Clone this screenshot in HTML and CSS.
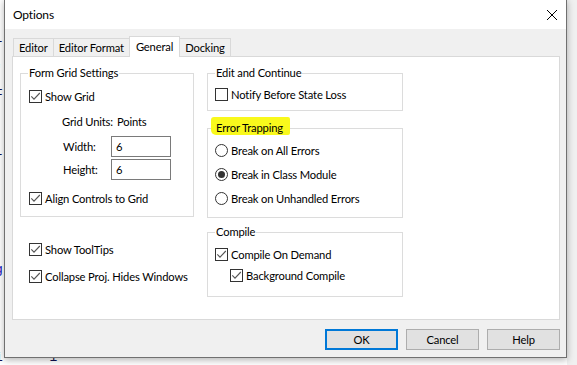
FILE: index.html
```html
<!DOCTYPE html>
<html>
  <head>
    <meta charset="utf-8"/>
    <title>Options</title>
    <link rel="stylesheet" href="styles.css">
  </head>

  <body>
    <div id="desk">
      <pre class="code">r

'

F




r








<span class="kw">g</span>






i      i</pre>
      <div class="scroll"></div>

      <div id="dialog">
        <div class="titlebar">
          <span class="title">Options</span>
          <svg class="close" width="10" height="10" viewBox="0 0 10 10"><path d="M0 0L10 10M10 0L0 10" stroke="#000" stroke-width="1"/></svg>
        </div>

        <div class="client">
          <div class="tabs">
            <span class="tab">Editor</span>
            <span class="tab">Editor Format</span>
            <span class="tab active">General</span>
            <span class="tab">Docking</span>
          </div>

          <div class="panel">
            <div class="col left">
              <fieldset class="group grid">
                <legend>Form Grid Settings</legend>
                <div class="gbody">
                  <label class="check">
                    <svg width="13" height="13" viewBox="0 0 13 13"><rect x=".5" y=".5" width="12" height="12" fill="#fff" stroke="#333"/><path d="M2.3 6.3L5 9.2 10.8 3" fill="none" stroke="#555" stroke-width="1.1"/></svg>
                    Show Grid
                  </label>
                  <div class="units"><span class="ulabel">Grid Units:</span>Points</div>
                  <div class="field"><span class="flabel">Width:</span><input type="text" value="6"></div>
                  <div class="field second"><span class="flabel">Height:</span><input type="text" value="6"></div>
                  <label class="check align">
                    <svg width="13" height="13" viewBox="0 0 13 13"><rect x=".5" y=".5" width="12" height="12" fill="#fff" stroke="#333"/><path d="M2.3 6.3L5 9.2 10.8 3" fill="none" stroke="#555" stroke-width="1.1"/></svg>
                    Align Controls to Grid
                  </label>
                </div>
              </fieldset>

              <label class="check loose tips">
                <svg width="13" height="13" viewBox="0 0 13 13"><rect x=".5" y=".5" width="12" height="12" fill="#fff" stroke="#333"/><path d="M2.3 6.3L5 9.2 10.8 3" fill="none" stroke="#555" stroke-width="1.1"/></svg>
                Show ToolTips
              </label>
              <label class="check loose collapse">
                <svg width="13" height="13" viewBox="0 0 13 13"><rect x=".5" y=".5" width="12" height="12" fill="#fff" stroke="#333"/><path d="M2.3 6.3L5 9.2 10.8 3" fill="none" stroke="#555" stroke-width="1.1"/></svg>
                Collapse Proj. Hides Windows
              </label>
            </div>

            <div class="col right">
              <fieldset class="group edit">
                <legend>Edit and Continue</legend>
                <div class="gbody">
                  <label class="check">
                    <svg width="13" height="13" viewBox="0 0 13 13"><rect x=".5" y=".5" width="12" height="12" fill="#fff" stroke="#333"/></svg>
                    Notify Before State Loss
                  </label>
                </div>
              </fieldset>

              <fieldset class="group errors">
                <legend class="marked">Error Trapping</legend>
                <div class="gbody">
                  <label class="check radio">
                    <svg width="13" height="13" viewBox="0 0 13 13"><circle cx="6.5" cy="6.5" r="6" fill="#fff" stroke="#333"/></svg>
                    Break on All Errors
                  </label>
                  <label class="check radio">
                    <svg width="13" height="13" viewBox="0 0 13 13"><circle cx="6.5" cy="6.5" r="6" fill="#fff" stroke="#333"/><circle cx="6.5" cy="6.5" r="3.5" fill="#333"/></svg>
                    Break in Class Module
                  </label>
                  <label class="check radio">
                    <svg width="13" height="13" viewBox="0 0 13 13"><circle cx="6.5" cy="6.5" r="6" fill="#fff" stroke="#333"/></svg>
                    Break on Unhandled Errors
                  </label>
                </div>
              </fieldset>

              <fieldset class="group compile">
                <legend>Compile</legend>
                <div class="gbody">
                  <label class="check">
                    <svg width="13" height="13" viewBox="0 0 13 13"><rect x=".5" y=".5" width="12" height="12" fill="#fff" stroke="#333"/><path d="M2.3 6.3L5 9.2 10.8 3" fill="none" stroke="#555" stroke-width="1.1"/></svg>
                    Compile On Demand
                  </label>
                  <label class="check sub">
                    <svg width="13" height="13" viewBox="0 0 13 13"><rect x=".5" y=".5" width="12" height="12" fill="#fff" stroke="#333"/><path d="M2.3 6.3L5 9.2 10.8 3" fill="none" stroke="#555" stroke-width="1.1"/></svg>
                    Background Compile
                  </label>
                </div>
              </fieldset>
            </div>
          </div>

          <div class="buttons">
            <button class="default">OK</button>
            <button>Cancel</button>
            <button>Help</button>
          </div>
        </div>
      </div>
    </div>
  </body>
</html>
```

FILE: styles.css
```css
html, body {
  margin: 0;
}

body {
  width: 577px;
  height: 365px;
  overflow: hidden;
  background: #fff;
  font-family: Lato, "Noto Sans", sans-serif;
  font-size: 11.2px;
  letter-spacing: -0.15px;
  color: #000;
}

#desk {
  position: relative;
  width: 577px;
  height: 365px;
}

/* code window behind the dialog */
#desk .code {
  margin: 0 0 0 -5px;
  padding-top: 39px;
  font-family: "Liberation Mono", monospace;
  font-size: 13px;
  line-height: 12.5px;
  letter-spacing: 0;
  color: #101050;
}

#desk .code .kw {
  color: #1010c0;
}

#desk .scroll {
  position: absolute;
  top: 0;
  right: 0;
  width: 10px;
  height: 365px;
  background: #f0f0f0;
}

#dialog {
  position: absolute;
  left: 4px;
  top: -1px;
  width: 563px;
  height: 359px;
  box-sizing: border-box;
  border: 1px solid #707070;
  background: #f0f0f0;
  box-shadow: 0 2px 7px rgba(0, 0, 0, 0.3);
  display: flex;
  flex-direction: column;
}

#dialog .titlebar {
  height: 29px;
  flex: none;
  background: #fff;
  display: flex;
  align-items: center;
  justify-content: space-between;
  padding: 0 9px 0 8px;
  font-size: 12px;
}

#dialog .titlebar .close {
  display: block;
}

#dialog .client {
  flex: 1;
  padding: 7px 6px 7px 7px;
  display: flex;
  flex-direction: column;
}

/* tabs */
#dialog .tabs {
  height: 21px;
  display: flex;
  align-items: flex-end;
  margin: 0 0 -1px 1px;
  position: relative;
  z-index: 1;
}

#dialog .tab {
  box-sizing: border-box;
  height: 19px;
  line-height: 17px;
  padding: 0 5px;
  margin-right: -1px;
  border: 1px solid #d9d9d9;
  background: #f0f0f0;
}

#dialog .tab.active {
  height: 21px;
  line-height: 19px;
  padding: 0 6px;
  border-bottom: none;
  background: #fff;
}

#dialog .panel {
  box-sizing: border-box;
  height: 264px;
  flex: none;
  background: #fff;
  border: 1px solid #d9d9d9;
  display: flex;
}

#dialog .col.left {
  margin-left: 7px;
  width: 174px;
}

#dialog .col.right {
  margin-left: 13px;
  width: 196px;
}

/* group boxes */
#dialog fieldset {
  margin: 0;
  padding: 0;
  min-width: 0;
  border: 1px solid #dcdcdc;
}

#dialog legend {
  margin-left: 7px;
  padding: 0 1px;
  line-height: 14px;
}

#dialog legend.marked {
  position: relative;
  z-index: 0;
}

/* marker highlight drawn over the legend */
#dialog legend.marked::before {
  content: "";
  position: absolute;
  left: -4px;
  right: -6px;
  top: -4px;
  bottom: 0;
  background: #f9f91c;
  border-radius: 3px 2px 2px 5px;
  z-index: -1;
}

#dialog .grid,
#dialog .edit {
  margin-top: 9px;
}

#dialog .grid .gbody {
  padding: 9px 0 10px 8px;
}

#dialog .edit .gbody {
  padding: 7px 0 8px 7px;
}

#dialog .errors {
  margin-top: 10px;
}

#dialog .errors .gbody {
  padding: 8px 0 11px 7px;
}

#dialog .compile {
  margin-top: 7px;
}

#dialog .compile .gbody {
  padding: 8px 0 13px 7px;
}

/* checkboxes and radios */
#dialog .check {
  display: flex;
  align-items: center;
  gap: 3px;
  height: 15px;
  white-space: nowrap;
}

#dialog .check svg {
  flex: none;
}

#dialog .check.radio + .check.radio {
  margin-top: 9px;
}

#dialog .check.sub {
  margin-top: 6px;
  padding-left: 15px;
}

#dialog .check.align {
  margin-top: 11px;
}

#dialog .check.loose {
  padding-left: 9px;
}

#dialog .check.tips {
  margin-top: 25px;
}

#dialog .check.collapse {
  margin-top: 12px;
}

/* grid size fields */
#dialog .units {
  margin-top: 10px;
  padding-left: 33px;
  line-height: 15px;
  white-space: nowrap;
}

#dialog .units .ulabel {
  display: inline-block;
  width: 55px;
}

#dialog .field {
  margin-top: 7px;
  padding-left: 34px;
  display: flex;
  align-items: center;
}

#dialog .field.second {
  margin-top: 2px;
}

#dialog .field .flabel {
  width: 48px;
}

#dialog .field input {
  width: 60px;
  height: 21px;
  box-sizing: border-box;
  margin: 0;
  padding: 0 4px;
  border: 1px solid #7a7a7a;
  font-family: inherit;
  font-size: 11.2px;
  color: #000;
}

/* dialog buttons */
#dialog .buttons {
  margin-top: 9px;
  display: flex;
  justify-content: flex-end;
  gap: 8px;
}

#dialog button {
  width: 73px;
  height: 21px;
  margin: 0;
  padding: 0;
  box-sizing: border-box;
  border: 1px solid #adadad;
  background: #e1e1e1;
  font-family: inherit;
  font-size: 11.2px;
  letter-spacing: -0.15px;
  color: #000;
}

#dialog button.default {
  border: 2px solid #0078d7;
}
```
